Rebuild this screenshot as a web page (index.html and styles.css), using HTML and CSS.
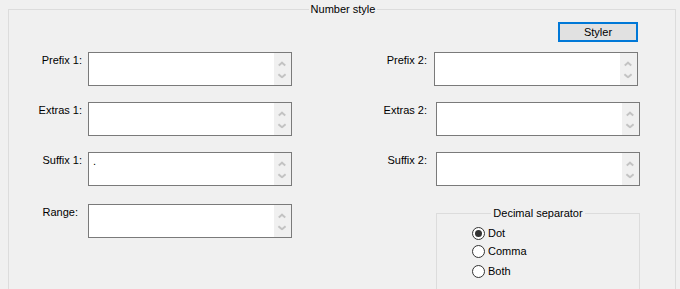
FILE: index.html
```html
<!DOCTYPE html>
<html>
<head>
<meta charset="utf-8">
<link rel="stylesheet" href="styles.css">
</head>
<body>
<div class="viewport">
<div class="frame">
  <div class="frame-title">Number style</div>
  <div class="toolbar">
    <button class="btn">Styler</button>
  </div>
  <div class="columns">
    <div class="col col-left">
      <label class="lbl">Prefix 1:</label>
      <div class="tbox"><div class="tval"></div><div class="sbar"><span class="chev up"></span><span class="chev down"></span></div></div>
      <label class="lbl">Extras 1:</label>
      <div class="tbox"><div class="tval"></div><div class="sbar"><span class="chev up"></span><span class="chev down"></span></div></div>
      <label class="lbl">Suffix 1:</label>
      <div class="tbox"><div class="tval">.</div><div class="sbar"><span class="chev up"></span><span class="chev down"></span></div></div>
      <label class="lbl lbl-range">Range:</label>
      <div class="tbox tbox-range"><div class="tval"></div><div class="sbar"><span class="chev up"></span><span class="chev down"></span></div></div>
    </div>
    <div class="col col-right">
      <label class="lbl">Prefix 2:</label>
      <div class="tbox tbox-shift"><div class="tval"></div><div class="sbar"><span class="chev up"></span><span class="chev down"></span></div></div>
      <label class="lbl">Extras 2:</label>
      <div class="tbox"><div class="tval"></div><div class="sbar"><span class="chev up"></span><span class="chev down"></span></div></div>
      <label class="lbl">Suffix 2:</label>
      <div class="tbox"><div class="tval"></div><div class="sbar"><span class="chev up"></span><span class="chev down"></span></div></div>
      <div class="group">
        <div class="group-title">Decimal separator</div>
        <div class="radios">
          <div class="radio-row r1"><span class="radio checked"></span><span class="rtext">Dot</span></div>
          <div class="radio-row r2"><span class="radio"></span><span class="rtext">Comma</span></div>
          <div class="radio-row r3"><span class="radio"></span><span class="rtext">Both</span></div>
        </div>
      </div>
    </div>
  </div>
</div>
</div>
</body>
</html>
```

FILE: styles.css
```css
* { box-sizing: border-box; }
html, body { margin: 0; padding: 0; background: #f0f0f0; overflow: hidden; }
body {
  font-family: "Liberation Sans", Arial, sans-serif;
  font-size: 11px;
  color: #000;
}
.viewport {
  width: 680px;
  height: 289px;
  overflow: hidden;
  padding: 9px 0 0 8px;
}
.frame {
  position: relative;
  width: 668px;
  height: 300px;
  border: 1px solid #dcdcdc;
  padding-top: 12px;
}
.frame-title {
  position: absolute;
  top: -8px;
  left: 0;
  right: 0;
  margin: 0 auto;
  width: max-content;
  padding: 0 2px;
  background: #f0f0f0;
  line-height: 14px;
  transform: translateX(1px);
}
.toolbar {
  display: flex;
  justify-content: flex-end;
  padding-right: 37px;
}
.btn {
  width: 80px;
  height: 20px;
  border: 2px solid #0078d7;
  background: #e1e1e1;
  font-family: inherit;
  font-size: 11px;
  color: #000;
  padding: 0;
  margin: 0;
  line-height: 16px;
}
.columns {
  display: flex;
  margin-top: 10px;
}
.col {
  display: grid;
  align-content: start;
}
.col-left {
  width: 331px;
  grid-template-columns: 79px 204px;
  row-gap: 16px;
}
.col-right {
  grid-template-columns: 96px 204px;
  row-gap: 16px;
}
.lbl {
  text-align: right;
  padding-right: 6px;
  padding-top: 2px;
  line-height: 13px;
}
.col-left .lbl-range { padding-right: 10px; margin-top: 2px; }
.tbox-range { margin-top: 2px; }
.col-right .lbl { padding-right: 9px; }
.tbox-shift { margin-left: -2px; }
.tbox {
  height: 34px;
  width: 204px;
  background: #fff;
  border: 1px solid #7a7a7a;
  display: flex;
}
.tval {
  flex: 1;
  padding: 2px 4px;
  line-height: 13px;
}
.sbar {
  width: 17px;
  background: #f0f0f0;
  position: relative;
}
.chev {
  position: absolute;
  left: 4px;
  width: 8px;
  height: 5px;
}
.chev::before, .chev::after {
  content: "";
  position: absolute;
  width: 5px;
  height: 1.5px;
  background: #c3c3c3;
}
.chev.up { top: 8px; }
.chev.down { top: 21px; }
.chev.up::before { left: 0; top: 2px; transform: rotate(-40deg); }
.chev.up::after { right: 0; top: 2px; transform: rotate(40deg); }
.chev.down::before { left: 0; top: 1px; transform: rotate(40deg); }
.chev.down::after { right: 0; top: 1px; transform: rotate(-40deg); }
.group {
  grid-column: 2;
  margin-top: 11px;
  position: relative;
  border: 1px solid #dcdcdc;
  width: 204px;
  height: 110px;
  padding: 12px 0 0 35px;
}
.group-title {
  position: absolute;
  top: -8px;
  left: 0;
  right: 0;
  margin: 0 auto;
  width: max-content;
  padding: 0 2px;
  background: #f0f0f0;
  line-height: 14px;
}
.radios { display: flex; flex-direction: column; }
.radio-row {
  display: flex;
  align-items: center;
  gap: 3px;
  height: 15px;
}
.r2 { margin-top: 3px; }
.r3 { margin-top: 5px; }
.radio {
  width: 13px;
  height: 13px;
  border-radius: 50%;
  border: 1px solid #333;
  background: #fff;
  position: relative;
  flex: none;
}
.radio.checked::after {
  content: "";
  position: absolute;
  left: 2px;
  top: 2px;
  width: 7px;
  height: 7px;
  border-radius: 50%;
  background: #333;
}
.rtext { line-height: 13px; }
```
